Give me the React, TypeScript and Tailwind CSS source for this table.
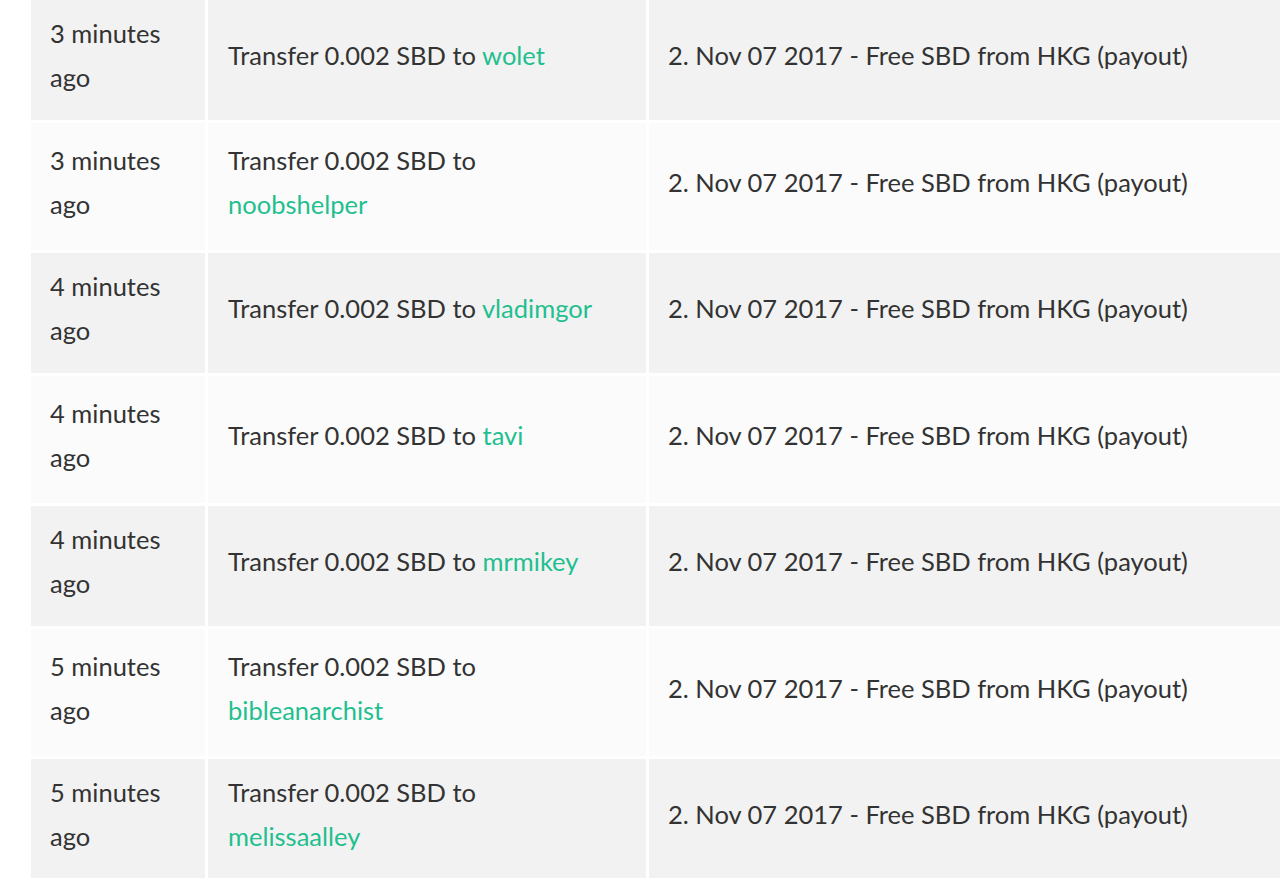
type Row = { time: string; user: string; wrap: boolean };

const rows: Row[] = [
  { time: "3 minutes ago", user: "wolet", wrap: false },
  { time: "3 minutes ago", user: "noobshelper", wrap: true },
  { time: "4 minutes ago", user: "vladimgor", wrap: false },
  { time: "4 minutes ago", user: "tavi", wrap: false },
  { time: "4 minutes ago", user: "mrmikey", wrap: false },
  { time: "5 minutes ago", user: "bibleanarchist", wrap: true },
  { time: "5 minutes ago", user: "melissaalley", wrap: true },
];

export default function App() {
  return (
    <div
      className="h-[878px] overflow-hidden bg-white pl-[31px] text-[25.5px] leading-[44px] text-[#333333]"
      style={{ fontFamily: "Lato, 'Open Sans', sans-serif" }}
    >
      <div className="flex flex-col gap-y-[3px]">
        {rows.map((r, i) => {
          const odd = i % 2 === 0;
          const bg = odd ? "bg-[#f2f2f2]" : "bg-[#fbfbfb]";
          const h = odd ? "h-[120px]" : "h-[127px]";
          return (
            <div key={i} className={`grid grid-cols-[174px_438px_1fr] gap-x-[3px] ${h}`}>
              <div className={`${bg} flex items-center px-[19px] pb-[10px]`}>
                <span>{r.time}</span>
              </div>
              <div className={`${bg} flex items-center px-[20px] pb-[10px]`}>
                <span>
                  Transfer 0.002 SBD to{r.wrap ? <br /> : " "}
                  <a className="text-[#1fbf8f]" href="#">
                    {r.user}
                  </a>
                </span>
              </div>
              <div className={`${bg} flex items-center px-[19px] pb-[10px]`}>
                <span className="whitespace-nowrap">2. Nov 07 2017 - Free SBD from HKG (payout)</span>
              </div>
            </div>
          );
        })}
      </div>
    </div>
  );
}
